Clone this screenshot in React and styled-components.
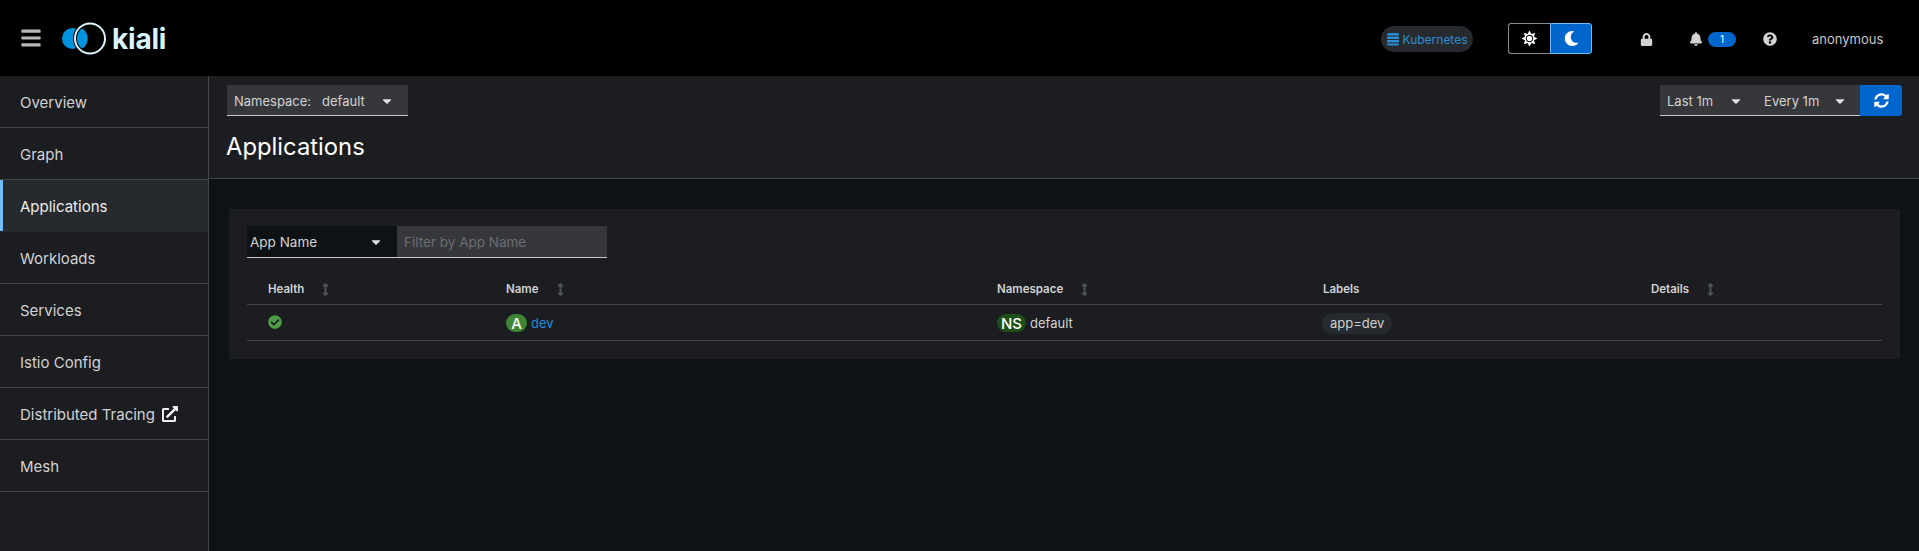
import React from 'react';
import styled, { createGlobalStyle } from 'styled-components';
import { FaBars, FaLock, FaBell, FaQuestionCircle, FaSyncAlt, FaCheckCircle, FaExternalLinkAlt, FaMoon, FaSun, FaCaretDown, FaArrowsAltV } from 'react-icons/fa';

const Global = createGlobalStyle`
  html, body { margin: 0; padding: 0; background: #0f1214; }
  body { font-family: Inter, "Noto Sans", "Liberation Sans", sans-serif; color: #e0e0e0; }
  * { box-sizing: border-box; }
`;
const Page = styled.div`width: 1919px; height: 551px; display: flex; flex-direction: column; overflow: hidden;`;
const Masthead = styled.header`height: 76px; background: #000; display: flex; align-items: center; flex: none;`;
const Burger = styled.div`width: 60px; padding-left: 20px; display: flex; color: #b8b8b8; font-size: 22px; margin-top: -1px;`;
const LogoWrap = styled.div`display: flex; align-items: center; width: 1321px;`;
const LogoText = styled.span`font: 700 28px/1 Inter, sans-serif; color: #d9f3fb; letter-spacing: -0.2px; margin-left: 4px; margin-top: 1px;`;
const ClusterPill = styled.div`width: 92px; height: 26px; border-radius: 13px; background: #26292d; color: #2b8fd6; font-size: 12px; display: flex; align-items: center; justify-content: center; gap: 2px; margin-right: 35px; margin-top: 2px;`;
const Toggle = styled.div`display: flex; height: 31px; width: 84px; margin-right: 48px; margin-top: 1px;`;
const ToggleBtn = styled.div`
  flex: ${p => (p.$on ? 41 : 43)}; display: flex; align-items: center; justify-content: center; font-size: 15px; color: #fff;
  background: ${p => (p.$on ? '#0066cc' : '#000')};
  border: 1px solid ${p => (p.$on ? '#73bcf7' : '#8a8d90')};
  border-radius: ${p => (p.$on ? '0 3px 3px 0' : '3px 0 0 3px')};
  ${p => (p.$on ? '' : 'border-right: none;')}
`;
const StatusIcons = styled.div`display: flex; align-items: center; color: #d2d2d2; font-size: 14px; margin-top: 2px;`;
const LockIcon = styled(FaLock)`font-size: 13px; margin-right: 36px;`;
const Badge = styled.span`width: 28px; height: 15px; border-radius: 8px; background: #0066cc; color: #fff; font-size: 10px; display: inline-flex; align-items: center; justify-content: center; margin-left: 5px; margin-right: 27px;`;
const User = styled.span`font-size: 13px; color: #c7c7c7; margin-left: 35px;`;
const Body = styled.div`flex: 1; display: flex; min-height: 0;`;
const Sidebar = styled.nav`width: 209px; flex: none; background: #1b1d21; border-right: 1px solid #444548;`;
const NavItem = styled.div`
  height: 52px; display: flex; align-items: center; gap: 7px; padding: 2px 0 0 20px; font-size: 15px; color: ${p => (p.$active ? '#ececec' : '#d2d2d2')};
  border-bottom: 1px solid #444548;
  ${p => p.$active && 'background: #26292d; border-bottom-color: #26292d; box-shadow: inset 3px 0 0 #73bcf7;'}
  svg { font-size: 16px; color: #f0f0f0; margin-top: -2px; }
`;
const Main = styled.main`flex: 1; display: flex; flex-direction: column; min-width: 0;`;
const Header = styled.div`height: 103px; background: #1b1d21; border-bottom: 1px solid #444548; padding: 9px 17px 0 18px; flex: none;`;
const TopRow = styled.div`display: flex; justify-content: space-between;`;
const Select = styled.div`height: 31px; background: #36373b; border-bottom: 1px solid #c7c7c7; display: flex; align-items: center; font-size: 13px; color: #d2d2d2; padding: 1px 0 0 7px; white-space: nowrap; width: ${p => p.$w}px;`;
const Caret = styled(FaCaretDown)`font-size: 14px; color: #e0e0e0; margin-left: ${p => p.$l || 0}px; margin-right: ${p => p.$r || 0}px;`;
const Value = styled.span`margin-left: 11px; margin-right: 15px;`;
const Right = styled.div`display: flex;`;
const Refresh = styled.div`width: 42px; height: 31px; background: #0066cc; border-radius: 0 3px 3px 0; color: #fff; display: flex; align-items: center; justify-content: center; font-size: 15px;`;
const Title = styled.h1`margin: 13px 0 0 -1px; font-size: 23.8px; font-weight: 400; line-height: 36px; color: #fff;`;
const Content = styled.div`padding: 30px 19px 0 20px;`;
const Card = styled.section`height: 150px; background: #1b1d21; padding: 17px 18px 0;`;
const Filter = styled.div`display: flex; height: 32px; width: 360px; border-bottom: 1px solid #c7c7c7; font-size: 13.5px;`;
const FilterSelect = styled.div`width: 150px; background: #0f1214; color: #d2d2d2; display: flex; align-items: center; justify-content: space-between; padding: 0 14px 0 3px;`;
const FilterInput = styled.div`flex: 1; background: #36373b; color: #6a6e73; display: flex; align-items: center; padding-left: 7px;`;
const Row = styled.div`
  display: grid; grid-template-columns: 238px 491px 326px 328px 1fr; padding-left: 21px; border-bottom: 1px solid #444548;
  height: ${p => p.$h}px; align-items: center;
`;
const HeadRow = styled(Row)`align-items: end; padding-bottom: 8px;`;
const Th = styled.div`font-size: 11.5px; font-weight: 600; color: #d2d2d2; display: flex; align-items: center; gap: 15px; svg { color: #4f5255; font-size: 13px; }`;
const Td = styled.div`font-size: 13px; color: #d2d2d2; display: flex; align-items: center; gap: 4px; padding-top: 1px;`;
const Ok = styled(FaCheckCircle)`font-size: 14px; color: #4f9e47; margin-top: -3px;`;
const Chip = styled.span`
  height: 18px; min-width: 21px; padding: 0 4px; border-radius: 9px; color: #fff; font-size: 15px; font-weight: 500;
  background: ${p => p.$bg}; display: inline-flex; align-items: center; justify-content: center;
`;
const Link = styled.span`color: #1f8fdc;`;
const Label = styled.span`height: 21px; border-radius: 11px; background: #26292d; padding: 0 8px; display: inline-flex; align-items: center; margin-left: -1px;`;
const Sort = () => <FaArrowsAltV />;

const nav = ['Overview', 'Graph', 'Applications', 'Workloads', 'Services', 'Istio Config', 'Distributed Tracing', 'Mesh'];

const Logo = () => (
  <svg width="48" height="36" viewBox="0 0 48 36" aria-hidden="true">
    <circle cx="12.5" cy="18.5" r="10.5" fill="#0093dd" />
    <path d="M21.5 8 A14.5 14.5 0 0 0 21.5 29 A12 12 0 0 0 21.5 8 Z" fill="#0093dd" />
    <circle cx="30" cy="18.5" r="15" fill="none" stroke="#000" strokeWidth="4" />
    <circle cx="30" cy="18.5" r="15" fill="none" stroke="#d9f3fb" strokeWidth="2" />
  </svg>
);

const ClusterIcon = () => (
  <svg width="14" height="14" viewBox="0 0 14 14" fill="#2b8fd6" aria-hidden="true">
    <path d="M3 1 H11 A2 2 0 0 1 13 3 V3.6 H1 V3 A2 2 0 0 1 3 1 Z" />
    <rect x="1" y="4.6" width="12" height="2.4" />
    <rect x="1" y="8" width="12" height="2.4" />
    <path d="M1 11.4 H13 V12 A1.4 1.4 0 0 1 11.6 13.4 H2.4 A1.4 1.4 0 0 1 1 12 Z" />
  </svg>
);

export default function App() {
  return (
    <Page>
      <Global />
      <Masthead>
        <Burger><FaBars /></Burger>
        <LogoWrap><Logo /><LogoText>kiali</LogoText></LogoWrap>
        <ClusterPill><ClusterIcon />Kubernetes</ClusterPill>
        <Toggle>
          <ToggleBtn><FaSun /></ToggleBtn>
          <ToggleBtn $on><FaMoon /></ToggleBtn>
        </Toggle>
        <StatusIcons>
          <LockIcon />
          <FaBell />
          <Badge>1</Badge>
          <FaQuestionCircle />
          <User>anonymous</User>
        </StatusIcons>
      </Masthead>
      <Body>
        <Sidebar>
          {nav.map(n => (
            <NavItem key={n} $active={n === 'Applications'}>
              {n}{n === 'Distributed Tracing' && <FaExternalLinkAlt />}
            </NavItem>
          ))}
        </Sidebar>
        <Main>
          <Header>
            <TopRow>
              <Select $w={181}>
                <span>Namespace:</span>
                <Value>default</Value>
                <Caret />
              </Select>
              <Right>
                <Select $w={200}>
                  <span>Last 1m</span>
                  <Caret $l={16} $r={21} />
                  <span>Every 1m</span>
                  <Caret $l={14} />
                </Select>
                <Refresh><FaSyncAlt /></Refresh>
              </Right>
            </TopRow>
            <Title>Applications</Title>
          </Header>
          <Content>
            <Card>
              <Filter>
                <FilterSelect><span>App Name</span><Caret /></FilterSelect>
                <FilterInput>Filter by App Name</FilterInput>
              </Filter>
              <HeadRow $h={47}>
                <Th>Health <Sort /></Th>
                <Th>Name <Sort /></Th>
                <Th>Namespace <Sort /></Th>
                <Th>Labels</Th>
                <Th>Details <Sort /></Th>
              </HeadRow>
              <Row $h={36}>
                <Td><Ok /></Td>
                <Td><Chip $bg="#3e8635">A</Chip><Link>dev</Link></Td>
                <Td><Chip $bg="#1e4f18">NS</Chip>default</Td>
                <Td><Label>app=dev</Label></Td>
                <Td />
              </Row>
            </Card>
          </Content>
        </Main>
      </Body>
    </Page>
  );
}
